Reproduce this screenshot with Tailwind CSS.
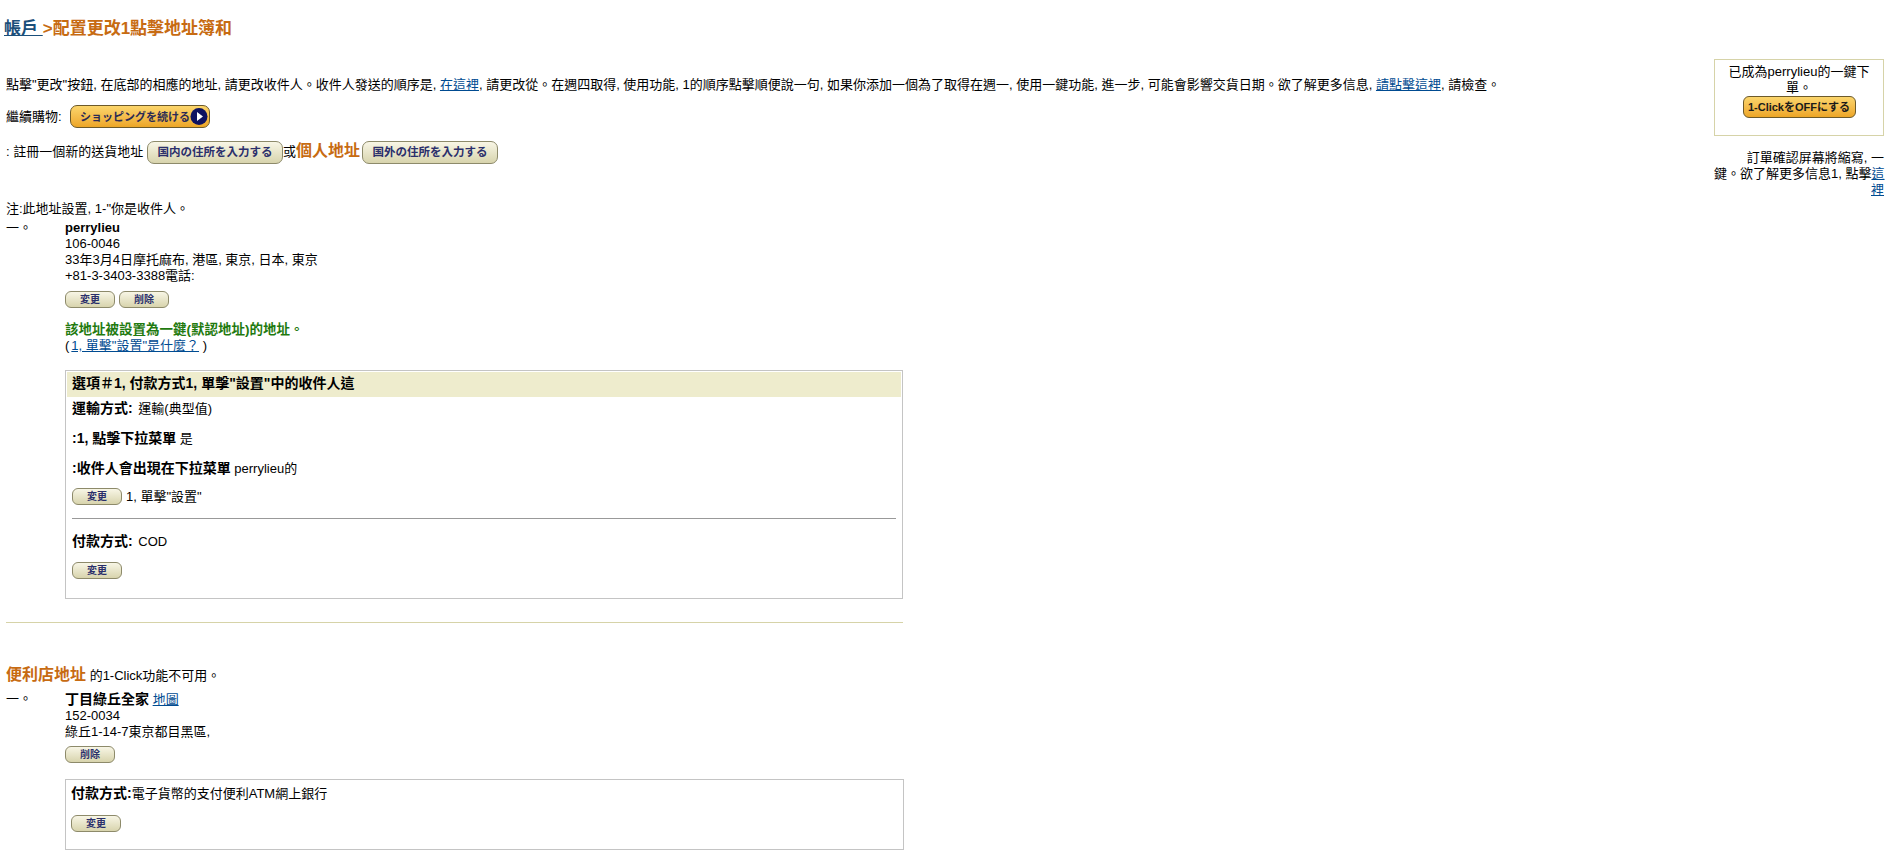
<!DOCTYPE html>
<html lang="zh-Hant">
<head>
  <meta charset="UTF-8">
  <title>配置更改1點擊地址簿和</title>
  <script src="https://cdn.jsdelivr.net/npm/@tailwindcss/browser@4"></script>
</head>
<body class="bg-white text-black text-[13px] leading-[16px] font-['Liberation_Sans','Noto_Sans_CJK_TC',sans-serif]">
  <div class="flex h-[860px] overflow-hidden">
    <main class="flex-1 pl-[6px]">
      <h1 class="pt-[20px] -ml-[2px] h-[77px] text-[17px] leading-[18px] font-bold text-[#c76b12]"><a href="#" class="underline text-[#1b4f7a]">帳戶 </a>&gt;配置更改1點擊地址簿和</h1>

      <p class="h-[16px] whitespace-nowrap">點擊"更改"按鈕, 在底部的相應的地址, 請更改收件人。收件人發送的順序是, <a href="#" class="underline text-[#004b91]">在這裡</a>, 請更改從。在週四取得, 使用功能, 1的順序點擊順便說一句, 如果你添加一個為了取得在週一, 使用一鍵功能, 進一步, 可能會影響交貨日期。欲了解更多信息, <a href="#" class="underline text-[#004b91]">請點擊這裡</a>, 請檢查。</p>

      <div class="flex items-center mt-[12px] h-[23px]">
        <span class="w-[64px] whitespace-nowrap">繼續購物:</span>
        <button class="flex items-center justify-between w-[140px] h-[23px] pl-[9px] pr-[1px] rounded-[7px] border border-[#6d5a2a] bg-gradient-to-b from-[#fbd56b] to-[#eda625] text-[11px] font-bold text-[#2a2a55] whitespace-nowrap">
          ショッピングを続ける
          <svg width="19" height="19" viewBox="0 0 18 18"><circle cx="9" cy="9" r="8.5" fill="#0e1260"/><path d="M7 4.5 L13 9 L7 13.5 Z" fill="#fff"/></svg>
        </button>
      </div>

      <div class="flex items-center mt-[12px] h-[24px]">
        <span class="w-[141px] whitespace-nowrap">: 註冊一個新的送貨地址</span>
        <button class="w-[136px] h-[23px] rounded-[7px] border border-[#8d8a6a] bg-gradient-to-b from-[#f8f6e6] to-[#d8d4ad] text-[11.5px] font-bold text-[#2b2f6b] whitespace-nowrap">国内の住所を入力する</button>
        <span>或</span>
        <span class="w-[66px] text-[16px] font-bold text-[#c76b12] -mt-[3px] whitespace-nowrap">個人地址</span>
        <button class="w-[136px] h-[23px] rounded-[7px] border border-[#8d8a6a] bg-gradient-to-b from-[#f8f6e6] to-[#d8d4ad] text-[11.5px] font-bold text-[#2b2f6b] whitespace-nowrap">国外の住所を入力する</button>
      </div>

      <p class="mt-[37px] h-[16px]">注:此地址設置, 1-"你是收件人。</p>

      <div class="flex mt-[3px]">
        <span class="w-[59px] shrink-0">一。</span>
        <div class="w-[838px]">
          <p class="font-bold">perrylieu</p>
          <p>106-0046</p>
          <p>33年3月4日摩托麻布, 港區, 東京, 日本, 東京</p>
          <p>+81-3-3403-3388電話:</p>
          <div class="flex gap-[4px] mt-[7px]">
            <button class="w-[50px] h-[17px] rounded-[6px] border border-[#8d8a6a] bg-gradient-to-b from-[#f8f6e6] to-[#d8d4ad] text-[10px] leading-[13px] font-bold text-[#2b2f6b]">変更</button>
            <button class="w-[50px] h-[17px] rounded-[6px] border border-[#8d8a6a] bg-gradient-to-b from-[#f8f6e6] to-[#d8d4ad] text-[10px] leading-[13px] font-bold text-[#2b2f6b]">削除</button>
          </div>
          <p class="mt-[14px] text-[13.5px] font-bold text-[#1f7a0f]">該地址被設置為一鍵(默認地址)的地址。</p>
          <p>(<a href="#" class="ml-[2px] underline text-[#004b91]">1, 單擊"設置"是什麼？</a> )</p>

          <section class="mt-[16px] h-[229px] border border-[#c4c4c4] p-px">
            <h2 class="h-[25px] pl-[5px] text-[14px] font-bold leading-[23px] bg-[#eeeccd] whitespace-nowrap">選項＃1, 付款方式1, 單擊"設置"中的收件人這</h2>
            <div class="px-[5px]">
              <p class="mt-[3px]"><b class="text-[14px]">運輸方式:</b> <span class="ml-[2px]">運輸(典型值)</span></p>
              <p class="mt-[13px]"><b class="text-[14px]">:1, 點擊下拉菜單</b> 是</p>
              <p class="mt-[13px]"><b class="text-[14px]">:收件人會出現在下拉菜單</b> perrylieu的</p>
              <div class="flex items-center gap-[4px] mt-[11px]">
                <button class="w-[50px] h-[17px] rounded-[6px] border border-[#8d8a6a] bg-gradient-to-b from-[#f8f6e6] to-[#d8d4ad] text-[10px] leading-[13px] font-bold text-[#2b2f6b]">変更</button>
                <span>1, 單擊"設置"</span>
              </div>
              <hr class="mt-[13px] border-t border-[#999]">
              <p class="mt-[14px]"><b class="text-[14px]">付款方式:</b> <span class="ml-[2px]">COD</span></p>
              <button class="block mt-[12px] w-[50px] h-[17px] rounded-[6px] border border-[#8d8a6a] bg-gradient-to-b from-[#f8f6e6] to-[#d8d4ad] text-[10px] leading-[13px] font-bold text-[#2b2f6b]">変更</button>
            </div>
          </section>
        </div>
      </div>

      <hr class="mt-[23px] w-[897px] border-t border-[#d6d3a8]">

      <p class="mt-[42px] h-[20px] leading-[20px]"><span class="text-[16px] font-bold text-[#c76b12]">便利店地址</span> 的1-Click功能不可用。</p>

      <div class="flex mt-[6px]">
        <span class="w-[59px] shrink-0">一。</span>
        <div class="w-[839px]">
          <p><b class="text-[14px]">丁目綠丘全家</b> <a href="#" class="underline text-[#004b91]">地圖</a></p>
          <p>152-0034</p>
          <p>綠丘1-14-7東京都目黑區,</p>
          <button class="block mt-[6px] w-[50px] h-[17px] rounded-[6px] border border-[#8d8a6a] bg-gradient-to-b from-[#f8f6e6] to-[#d8d4ad] text-[10px] leading-[13px] font-bold text-[#2b2f6b]">削除</button>
          <section class="mt-[16px] h-[71px] border border-[#c4c4c4] px-[5px] pt-[5px]">
            <p><b class="text-[14px]">付款方式:</b>電子貨幣的支付便利ATM網上銀行</p>
            <button class="block mt-[13px] w-[50px] h-[17px] rounded-[6px] border border-[#8d8a6a] bg-gradient-to-b from-[#f8f6e6] to-[#d8d4ad] text-[10px] leading-[13px] font-bold text-[#2b2f6b]">変更</button>
          </section>
        </div>
      </div>
    </main>

    <aside class="w-[170px] shrink-0 mr-[10px] pt-[59px]">
      <div class="h-[77px] border border-[#d6d3a8] pt-[4px] text-center">
        <p class="px-[8px]">已成為perrylieu的一鍵下單。</p>
        <button class="w-[113px] h-[22px] rounded-[6px] border border-[#6d5a2a] bg-gradient-to-b from-[#fbd56b] to-[#eda625] text-[11px] font-bold text-[#1a1a1a] whitespace-nowrap">1-ClickをOFFにする</button>
      </div>
      <p class="mt-[14px] text-right whitespace-nowrap">訂單確認屏幕將縮寫, 一<br>鍵。欲了解更多信息1, 點擊<a href="#" class="underline text-[#004b91]">這<br>裡</a></p>
    </aside>
  </div>
</body>
</html>
